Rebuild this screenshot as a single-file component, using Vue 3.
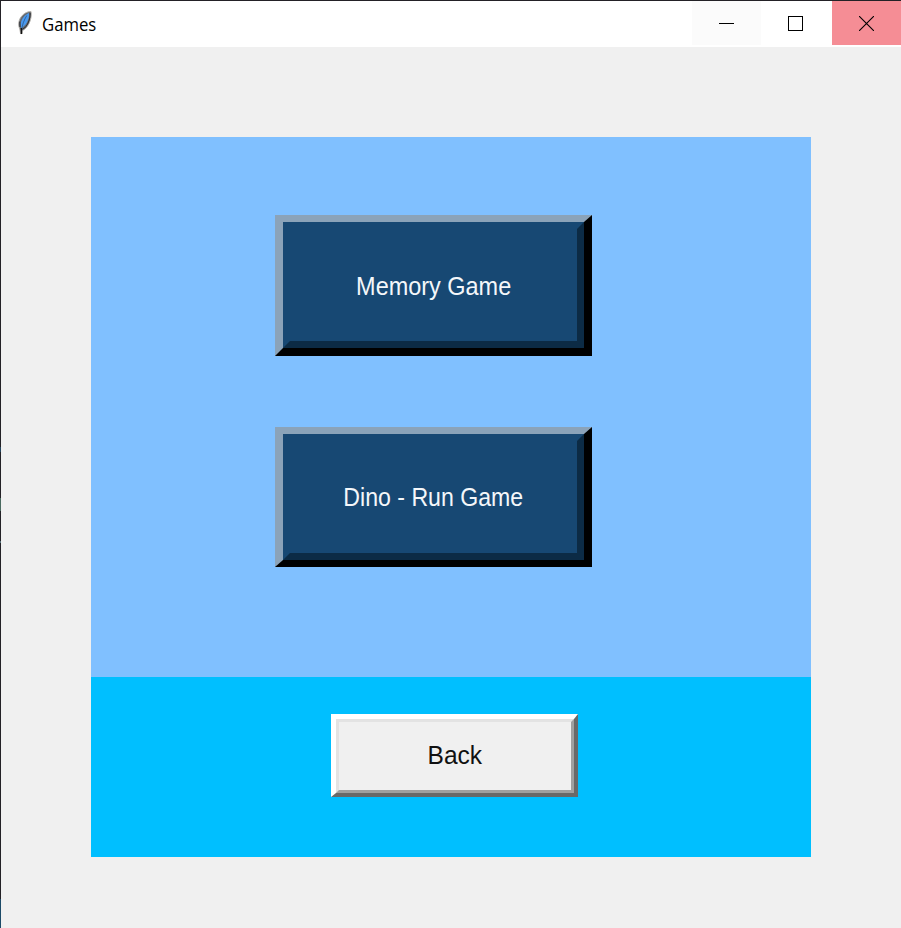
<script setup>
const games = [
  { label: 'Memory Game', kind: 'memory' },
  { label: 'Dino - Run Game', kind: 'dino' },
]
</script>

<template>
  <div class="window">
    <header class="titlebar">
      <svg class="feather" width="18" height="26" viewBox="0 0 18 26">
        <path d="M16 1.5C11 1.3 5.8 5.6 4.3 10.4C3.3 13.6 3.6 16.5 4.8 19l.8 4.6h1.5l.2-3C12.6 18.6 17.4 9.5 16 1.5z" fill="#66696e" stroke="#b5b2ad" stroke-width="1" />
        <path d="M14 3C9.8 4.6 6.4 9 5.8 13.5l.1 4.8c5-2.2 8.8-9 8.1-15.3z" fill="#4a9af0" />
        <path d="M15.2 2.8c.2 7-3 14-7.4 16.4M4.8 11.5l.2 5.5" fill="none" stroke="#2b2d31" stroke-width="1" />
        <path d="M11.8 5.5C9 10 7 15 6.4 22" fill="none" stroke="#2a578c" stroke-width=".8" />
        <path d="M6.4 18v6" stroke="#111" stroke-width="1.5" />
      </svg>
      <h1 class="title"><span>Games</span></h1>
      <div class="controls">
        <button class="control minimize" aria-label="Minimize">
          <svg width="15" height="15" viewBox="0 0 15 15" shape-rendering="crispEdges"><path d="M0 7.5h15" stroke="#000" /></svg>
        </button>
        <button class="control maximize" aria-label="Maximize">
          <svg width="15" height="15" viewBox="0 0 15 15" shape-rendering="crispEdges"><path d="M.5.5h14v14H.5z" fill="none" stroke="#000" /></svg>
        </button>
        <button class="control close" aria-label="Close">
          <svg width="15" height="15" viewBox="0 0 15 15"><path d="M0 0l15 15M15 0L0 15" stroke="#000" stroke-width="1.1" /></svg>
        </button>
      </div>
    </header>
    <main class="content">
      <section class="games">
        <button v-for="game in games" :key="game.kind" class="game" :class="game.kind">
          <span class="face"><span class="label">{{ game.label }}</span></span>
        </button>
      </section>
      <section class="footer">
        <button class="back"><span class="face"><span class="label">Back</span></span></button>
      </section>
    </main>
  </div>
</template>

<style>
body { margin: 0; overflow: hidden; }
</style>

<style scoped>
* { box-sizing: border-box; }
button { margin: 0; padding: 0; border: 0; border-radius: 0; background: none; font-family: "Liberation Sans", sans-serif; }
.window {
  width: 901px;
  height: 928px;
  padding-left: 1px;
  border-top: 1px solid #232126;
  background:
    linear-gradient(#232126 446px, #24445c 446px 451px, #232126 451px 497px, #4a6a60 497px 510px, #232126 510px 540px, #567078 540px 542px, #232126 542px 898px, #1c4a68 898px) 0 0 / 1px 100% no-repeat,
    #f0f0f0;
}
.titlebar { display: flex; height: 46px; background: #fff; padding-left: 14px; }
.feather { display: block; margin-top: 9px; flex: none; }
.title { margin: 0 0 0 9px; font: 400 18px/46px "Open Sans", "Noto Sans", sans-serif; color: #000; }
.title span { display: inline-block; transform: scaleX(.93); transform-origin: left; }
.controls { display: flex; margin-left: auto; height: 44px; }
.control { display: flex; align-items: center; justify-content: center; width: 69px; height: 44px; }
.control svg { display: block; }
.minimize { background: #fbfbfb; }
.maximize { width: 71px; padding-right: 2px; }
.close { background: #f58d95; }
.content { width: 720px; margin: 90px 0 0 90px; }
.games { height: 540px; background: #80c0ff; padding: 78px 0 0 184px; display: flex; flex-direction: column; gap: 71px; }
.game { width: 317px; height: 141px; border: solid; border-width: 7px 8px 8px 8px; border-color: #8ba3b9 #000 #000 #8ba3b9; background: #174873; color: #f4f7fa; font-size: 25px; flex: none; }
.dino { height: 140px; border-bottom-width: 7px; }
.face { display: flex; align-items: center; justify-content: center; width: 100%; height: 100%; }
.game .face { border: solid; border-width: 7px; border-color: #174873 #0c2b45 #0c2b45 #174873; }
.memory .face { padding-top: 2px; }
.label { display: block; white-space: nowrap; line-height: 28px; }
.memory .label { transform: scaleX(.938); }
.dino .label { transform: scaleX(.925); }
.footer { height: 180px; background: #00bfff; padding: 37px 0 0 240px; }
.back { display: block; width: 247px; height: 83px; border: solid; border-width: 5px 4px 4px 5px; border-color: #fff #696969 #696969 #fff; background: #f0f0f0; color: #111; font-size: 25px; }
.back .face { border: solid; border-width: 3px; border-color: #e3e3e3 #a0a0a0 #a0a0a0 #e3e3e3; padding: 0 1px 2px 0; }
.back .label { transform: scaleX(.98); }
</style>
